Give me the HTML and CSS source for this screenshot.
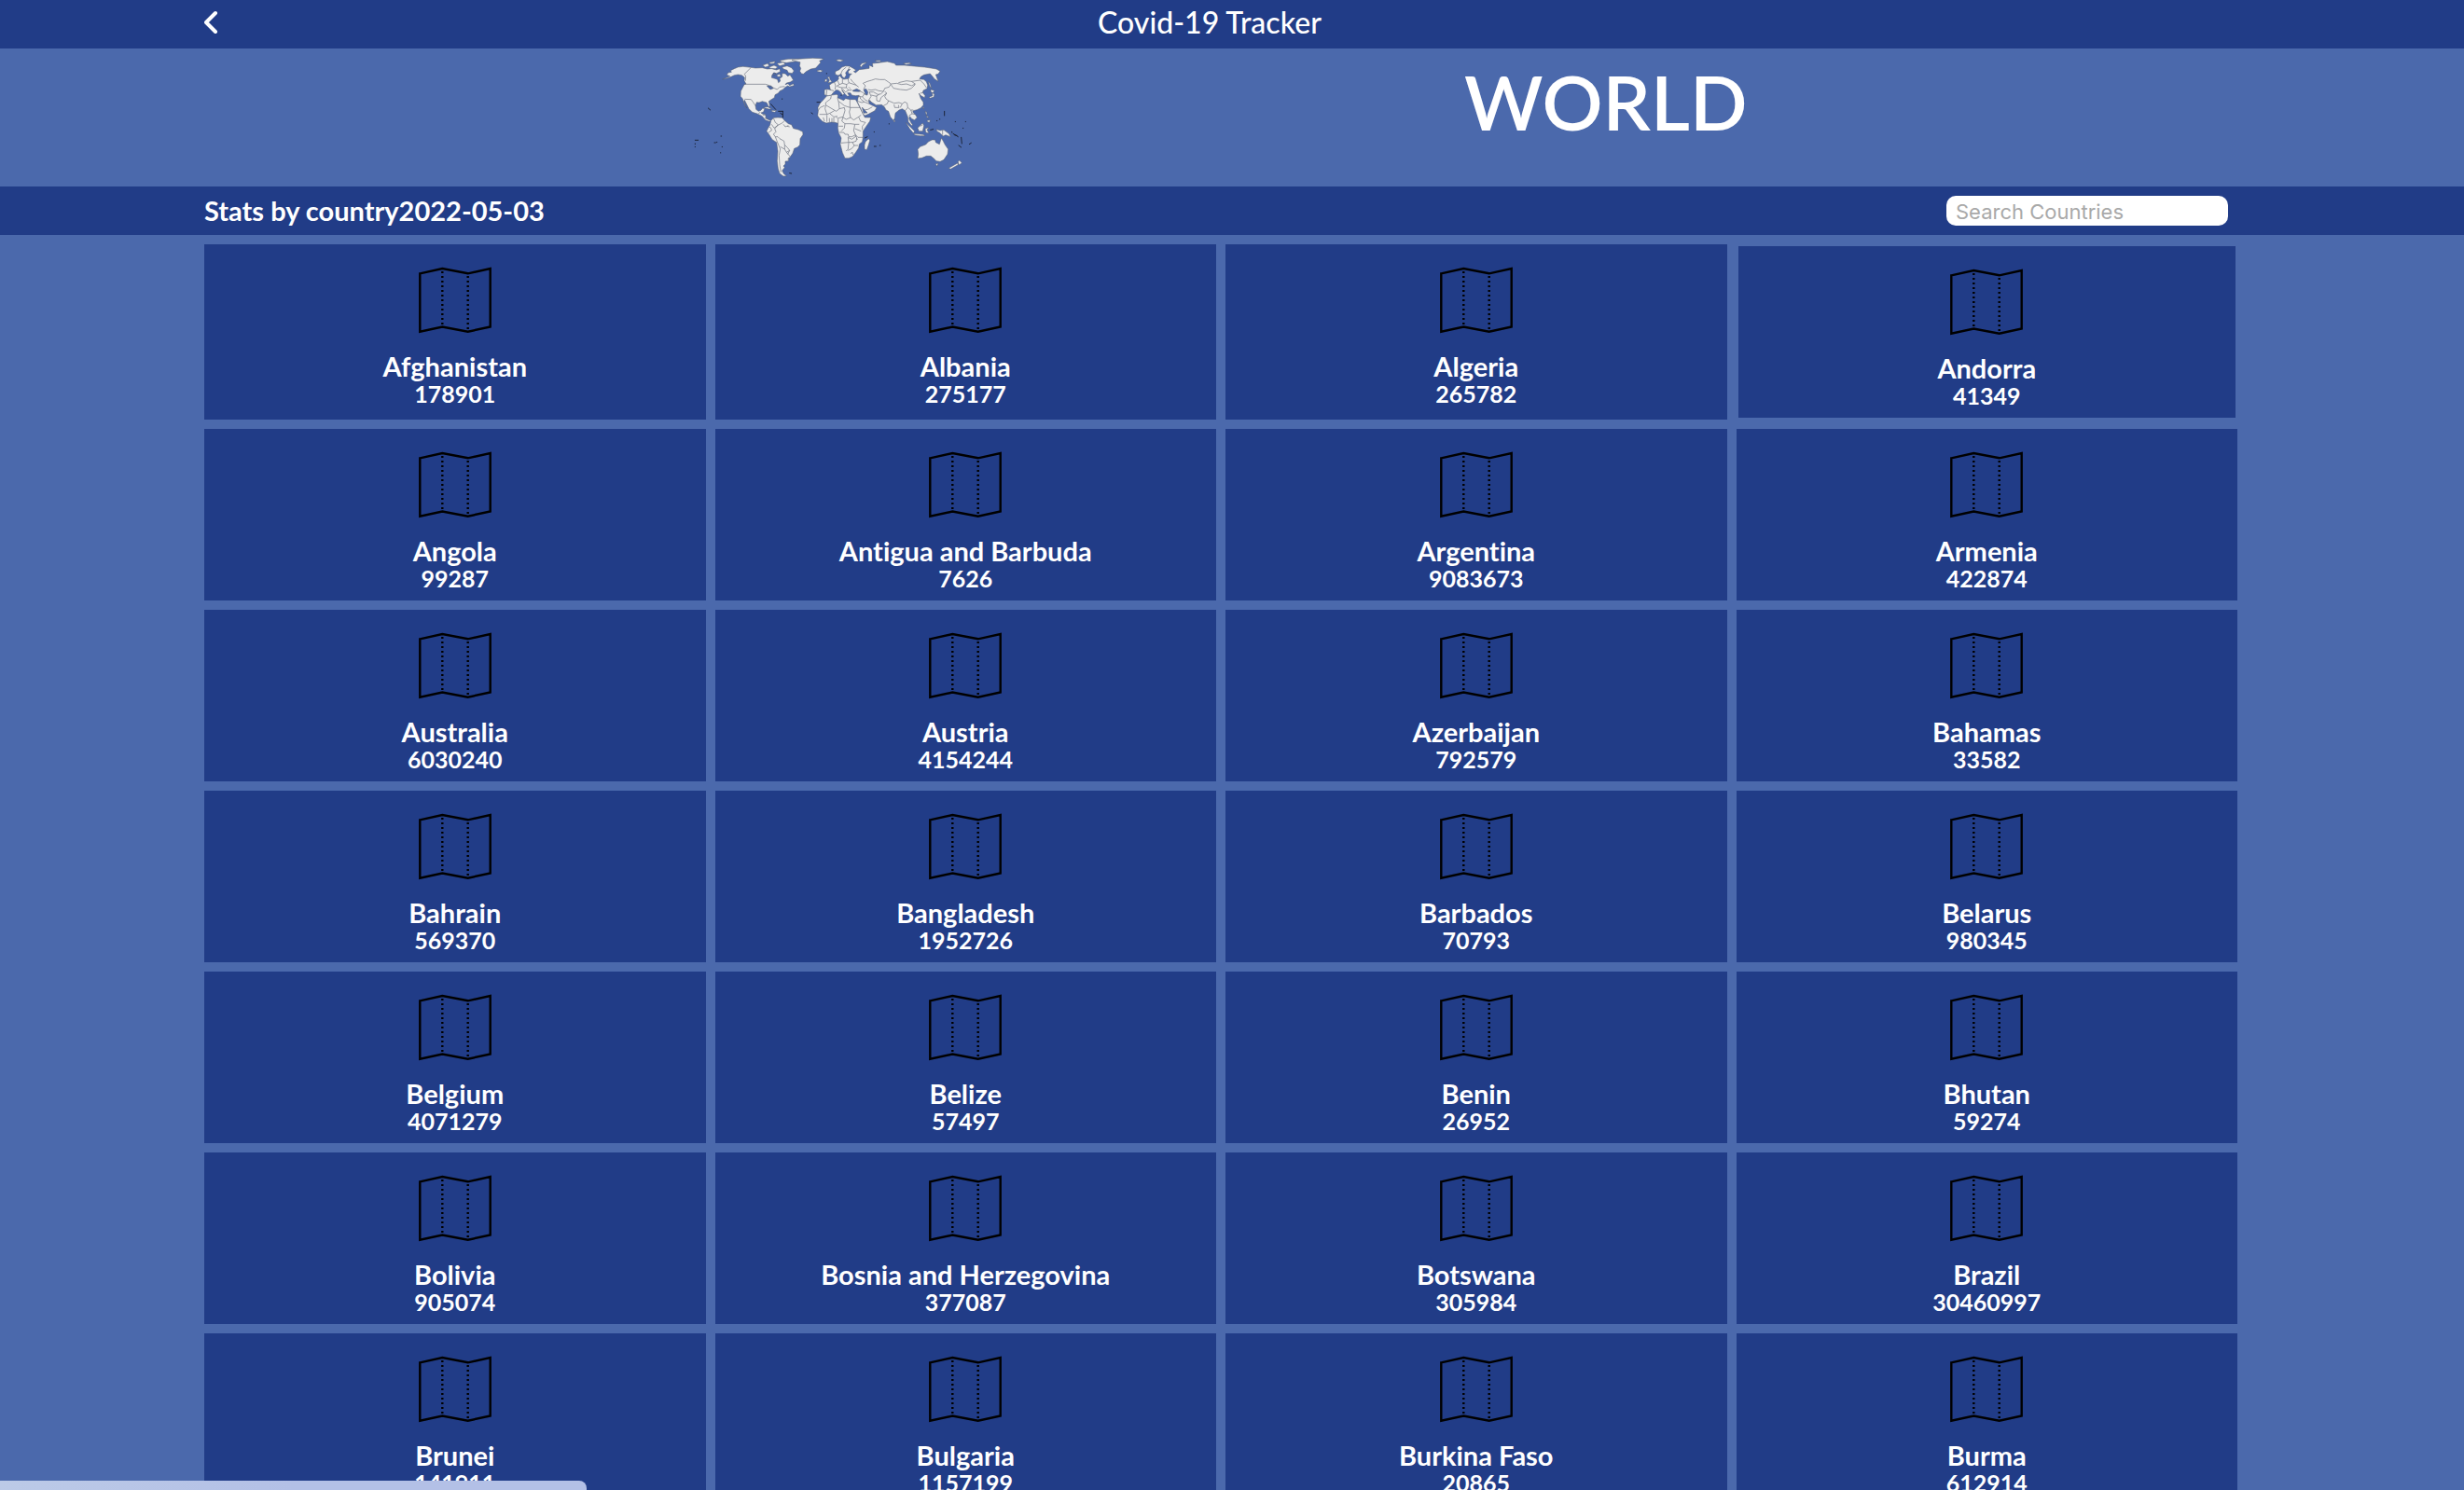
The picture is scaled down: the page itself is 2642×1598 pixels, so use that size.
FILE: index.html
```
<!DOCTYPE html>
<html lang="en">
<head>
<meta charset="utf-8">
<meta name="viewport" content="width=device-width, initial-scale=1">
<title>Covid-19 Tracker</title>
<link rel="stylesheet" href="styles.css">
</head>
<body>
<svg class="defs" aria-hidden="true">
  <symbol id="map" viewBox="0 0 80 80">
    <path d="M2.3 11.3 26.3 6 53.7 11.3 77.7 6V68.5L53.7 73.7 26.3 68.5 2.3 73.7Z" fill="none" stroke="#000" stroke-width="2.4"/>
    <path d="M26.3 9V68M53.7 14V73" fill="none" stroke="#000" stroke-width="2.4" stroke-dasharray="2 3"/>
  </symbol>
</svg>

<header class="topbar">
  <a class="back" href="#" aria-label="Back">
    <svg width="16" height="26" viewBox="1 0 16 26"><path d="M13 3 3 13 13 23" fill="none" stroke="#fff" stroke-width="4" stroke-linecap="round" stroke-linejoin="round"/></svg>
  </a>
  <p class="brand">Covid-19 Tracker</p>
</header>

<main>
<section class="hero">
  <svg class="world" viewBox="42 6 900 444" role="img" aria-label="World map">
    <g fill="#ececec" stroke="#555c6c" stroke-width="1.5" stroke-linejoin="round">
      <!-- North and Central America -->
      <path d="M134 105 150 99 158 95 148 91 152 84 163 82 160 77 172 71 184 66 200 64 226 67 240 69 262 68 278 72 292 71 308 75 318 71 320 80 306 87 300 84 293 92 292 100 303 103 311 106 314 116 320 111 318 103 326 97 326 86 336 87 344 95 351 91 356 98 362 108 352 114 340 117 336 122 345 119 350 125 362 119 364 125 350 129 344 126 334 132 330 137 318 143 314 149 303 155 301 164 290 171 283 176 286 190 283 194 276 180 262 176 252 180 244 179 240 190 242 202 250 208 258 205 262 199 270 199 266 210 258 213 263 217 272 218 274 231 284 236 290 238 285 241 272 236 262 224 246 216 230 211 219 200 212 186 205 172 203 176 208 192 213 198 207 191 201 175 199 168 192 160 193 143 204 122 210 120 204 110 205 99 196 92 184 90 172 92 162 97 148 102Z"/>
      <!-- Arctic islands -->
      <path d="M263 60 280 54 284 62 272 66ZM284 66 300 60 312 66 304 71 288 70ZM284 51 304 47 300 54 288 55ZM309 54 330 50 336 57 318 62ZM326 66 342 62 356 68 364 78 358 86 346 84 342 76 330 72ZM318 45 345 40 384 39 392 42 366 48 340 52 326 50ZM308 92 318 88 322 96 312 97Z"/>
      <path d="M357 43 390 39 424 37 450 38 460 40 446 46 450 51 442 60 434 69 418 72 403 80 395 88 388 87 383 79 386 70 382 62 384 50 366 46ZM438 77 448 75 457 78 450 82 440 80Z"/>
      <!-- Caribbean -->
      <path d="M266 195 280 194 292 201 284 201 272 198ZM293 205 308 206 302 211 293 209Z"/>
      <!-- South America -->
      <path d="M290 238 299 229 312 228 326 229 334 238 346 248 356 251 362 263 378 267 392 274 393 283 384 296 383 316 376 323 365 328 360 343 352 355 344 362 348 358 346 368 336 369 336 378 330 384 334 389 326 399 331 409 340 416 330 417 318 408 313 393 310 368 312 336 308 308 294 299 283 281 276 272 281 262 287 252Z"/>
      <!-- Africa -->
      <path d="M469 159 485 156 500 154 506 156 504 164 514 169 524 173 530 167 544 170 562 170 568 180 580 204 586 217 592 228 611 228 608 240 596 257 586 272 586 290 584 306 574 314 572 326 562 341 552 354 540 359 528 359 520 341 513 314 516 294 508 278 505 262 506 247 496 244 484 243 468 246 456 241 446 231 440 222 442 208 441 196 448 182 458 172ZM594 306 604 296 608 302 604 316 598 332 591 330 591 316Z"/>
      <!-- Eurasia -->
      <path d="M462 139 470 137 481 139 478 124 486 118 494 115 504 109 508 103 506 98 512 94 517 101 524 105 540 103 544 92 550 88 540 87 538 80 545 73 538 74 530 84 532 92 526 101 519 97 516 88 506 93 497 89 497 80 510 74 518 66 530 62 542 63 552 68 564 76 556 80 562 84 574 74 592 72 606 70 606 60 618 65 616 54 636 52 664 48 688 54 692 60 720 60 742 62 760 64 784 66 804 69 822 72 834 79 828 88 820 90 828 112 816 104 808 94 802 87 782 91 772 97 768 104 782 106 790 113 794 124 792 135 780 141 778 148 786 158 784 164 776 160 770 156 766 150 772 167 780 179 780 188 772 197 760 203 748 206 746 210 756 221 760 228 752 236 744 233 736 224 734 232 740 244 746 252 742 254 732 242 730 226 722 206 712 200 702 204 690 214 688 230 684 238 674 226 668 208 660 204 655 194 646 187 628 188 612 178 604 172 606 184 614 188 622 192 630 196 624 206 604 217 592 222 586 216 576 194 568 178 570 165 574 157 562 158 550 156 546 149 536 149 542 158 536 160 528 152 522 143 518 140 526 152 520 156 514 146 506 140 498 140 492 146 484 156 474 158 462 155Z"/>
      <!-- British Isles, Svalbard and Novaya Zemlya -->
      <path d="M472 98 478 97 480 106 486 113 474 117 478 108ZM464 106 470 104 470 112 463 113ZM499 43 510 41 524 44 514 48 506 47ZM576 62 582 54 598 50 594 54 584 60 582 66ZM624 45 640 44 644 48 630 48ZM716 54 734 52 742 55 724 58Z"/>
      <!-- Japan, Indonesia, Philippines and New Guinea -->
      <path d="M796 112 802 120 806 134 800 126ZM804 138 816 142 810 149 804 145ZM808 149 816 152 814 162 802 166 798 163 810 158ZM724 244 738 258 752 272 748 278 736 264ZM750 280 780 283 786 287 770 287 752 284ZM762 262 778 246 782 254 778 272 766 272ZM786 264 798 260 792 268 798 278 788 276ZM786 208 792 212 790 222 798 228 792 228ZM792 238 802 236 800 244 794 242ZM822 266 834 270 846 268 862 280 868 290 852 284 844 288 834 278 824 272ZM685 234 690 240 686 243ZM779 195 782 194 780 201Z"/>
      <!-- Oceania -->
      <path d="M762 331 770 322 788 315 796 306 808 300 818 300 820 308 832 314 838 294 844 304 850 316 860 330 858 346 846 364 834 370 822 368 814 360 804 352 790 352 776 358 762 360 764 346ZM820 377 828 376 824 385ZM892 370 896 366 904 374 894 381ZM862 391 890 375 892 380 868 394Z"/>
    </g>
    <!-- Seas cut into the land -->
    <g fill="#4b69ac" stroke="#555c6c" stroke-width="1.5">
      <path d="M552 142 560 138 566 136 578 142 574 145 556 144ZM588 138 596 136 602 146 600 156 594 154ZM583 195 600 213 588 214ZM298 84 306 86 303 92 296 92ZM277 126 290 126 298 134 288 138 282 132Z"/>
    </g>
    <!-- Borders -->
    <g fill="none" stroke="#6a6f7d" stroke-width="2" stroke-linejoin="round">
      <path d="M205 121H272L282 124 292 130 310 138 318 130 334 128M226 67 205 88 209 96 208 110M205 169 226 170 232 178 240 190M250 216 256 210M264 220 272 220M270 230 280 232"/>
      <path d="M298 230 304 244 314 252 300 262 292 250M314 252 326 246 334 238M330 250 336 258 346 254M342 256 350 258M312 252 302 264 306 274 298 282 304 290 312 290 318 296 332 304 334 316 344 326 350 334 340 340 334 330 334 316M304 290 310 306 316 320 320 330 316 350 318 380 322 404M320 322 334 330M340 340 352 354M282 276 292 270 290 262 284 258M350 334 344 346"/>
      <path d="M484 157 482 168 466 180 466 188 500 208 510 200 508 180 504 165M466 188 464 200 470 218 446 218M442 206 448 196 462 190M510 200 526 196 528 206 522 226 506 230M544 170V196H576M544 196 526 190 508 176M546 196 542 210 546 228 532 234 522 228M470 218 480 214 494 206M470 220 470 242M458 228 462 240M478 230V243M486 230V243M492 228V243M500 226 506 232 506 246M480 216 492 226 504 224M522 226 518 240 528 248 546 248 560 250M546 228 556 236 572 226 580 220M560 250 556 270 562 284 550 290 540 290 538 282 528 282 524 276 510 276M528 248 526 262 516 272M508 256 522 256M572 226 578 240 594 244 584 256 584 268M560 250 574 250M560 264 580 272M562 284 570 292 586 292M538 292 540 308 516 310M538 292 550 298 564 288M540 308 538 330 532 336M540 308 552 308 558 318 550 328 538 334M552 308 564 304 566 294M558 318 570 318M546 344 552 340 554 348M562 284 568 300"/>
      <path d="M480 139 492 142M470 139 468 156M494 115 498 126 496 138M504 109 510 122 500 128M510 122 520 118 520 104M520 118 534 122 540 116 538 104M534 122 532 132 516 132 504 128M532 132 540 140 530 146 522 138M540 140 550 140M540 116 552 120 564 124 572 130M546 104 552 112 564 124M540 130 546 136M518 132 520 142M514 90 520 76 532 66M538 76 542 66"/>
      <path d="M588 137 594 126 586 118 600 112 614 108 626 104 640 106 656 106 668 114 676 120 694 118 710 122 726 120 742 126 754 120 742 112 726 110 700 116M742 112 770 108 782 120 790 132M676 120 670 130 656 134 652 144 636 142 626 138 612 140 602 138M676 122 684 134 706 138 726 140 742 134 754 122M652 144 644 152 634 154 620 146 606 146M656 144 662 150 644 164 640 176 630 174 630 158 638 154M662 150 656 160 660 168 668 174 664 184 652 190M668 174 686 182 702 180 712 184 706 196M686 186 688 196 702 196 700 188M712 184 720 178 728 182 730 196 722 206M730 196 740 204 748 204M740 204 744 216 734 222M744 216 754 218M570 160 584 162 590 152 598 156M584 162 594 172 602 176M576 160 578 168 590 178 606 184M590 178 582 180 570 176M588 204 602 202 616 194M574 142 586 148 592 154M606 146 612 160 606 170 612 178M612 156 630 160M770 150 780 148M842 270V284M770 256 778 252"/>
    </g>
    <!-- Small islands -->
    <g fill="none" stroke="#1c2438" stroke-width="3" stroke-linecap="round">
      <path d="M290 185 296 192M297 193 305 202M314 208H328M328 208V228M326 218 320 214M350 407 356 408M420 213 424 216M438 179H448M88 198 95 204M46 301H56M46 312V314M46 322V323M108 309H112M116 307V308M129 288H131M133 322V323M128 341V342M469 86V87M516 156V157M592 294 600 290M622 321H628M640 318H642M848 208V222M824 238V239M833 233V234M883 241V242M916 241V242M908 262V263M872 274V276M876 280 892 290M888 286 880 284M902 292 904 312M894 318 902 324M928 314 934 310M622 274V275M670 248V249M326 168V169M803 268 812 266"/>
    </g>
  </svg>
  <h1 class="hero-title">WORLD</h1>
</section>

<section class="statsbar">
  <h2 class="stats-title">Stats by country2022-05-03</h2>
  <input class="search" type="text" placeholder="Search Countries" aria-label="Search Countries">
</section>

<section class="countries">
  <a class="card" href="#"><svg class="icon"><use href="#map"/></svg><h3 class="name">Afghanistan</h3><p class="count">178901</p></a>
  <a class="card" href="#"><svg class="icon"><use href="#map"/></svg><h3 class="name">Albania</h3><p class="count">275177</p></a>
  <a class="card" href="#"><svg class="icon"><use href="#map"/></svg><h3 class="name">Algeria</h3><p class="count">265782</p></a>
  <a class="card card-active" href="#"><svg class="icon"><use href="#map"/></svg><h3 class="name">Andorra</h3><p class="count">41349</p></a>
  <a class="card" href="#"><svg class="icon"><use href="#map"/></svg><h3 class="name">Angola</h3><p class="count">99287</p></a>
  <a class="card" href="#"><svg class="icon"><use href="#map"/></svg><h3 class="name">Antigua and Barbuda</h3><p class="count">7626</p></a>
  <a class="card" href="#"><svg class="icon"><use href="#map"/></svg><h3 class="name">Argentina</h3><p class="count">9083673</p></a>
  <a class="card" href="#"><svg class="icon"><use href="#map"/></svg><h3 class="name">Armenia</h3><p class="count">422874</p></a>
  <a class="card" href="#"><svg class="icon"><use href="#map"/></svg><h3 class="name">Australia</h3><p class="count">6030240</p></a>
  <a class="card" href="#"><svg class="icon"><use href="#map"/></svg><h3 class="name">Austria</h3><p class="count">4154244</p></a>
  <a class="card" href="#"><svg class="icon"><use href="#map"/></svg><h3 class="name">Azerbaijan</h3><p class="count">792579</p></a>
  <a class="card" href="#"><svg class="icon"><use href="#map"/></svg><h3 class="name">Bahamas</h3><p class="count">33582</p></a>
  <a class="card" href="#"><svg class="icon"><use href="#map"/></svg><h3 class="name">Bahrain</h3><p class="count">569370</p></a>
  <a class="card" href="#"><svg class="icon"><use href="#map"/></svg><h3 class="name">Bangladesh</h3><p class="count">1952726</p></a>
  <a class="card" href="#"><svg class="icon"><use href="#map"/></svg><h3 class="name">Barbados</h3><p class="count">70793</p></a>
  <a class="card" href="#"><svg class="icon"><use href="#map"/></svg><h3 class="name">Belarus</h3><p class="count">980345</p></a>
  <a class="card" href="#"><svg class="icon"><use href="#map"/></svg><h3 class="name">Belgium</h3><p class="count">4071279</p></a>
  <a class="card" href="#"><svg class="icon"><use href="#map"/></svg><h3 class="name">Belize</h3><p class="count">57497</p></a>
  <a class="card" href="#"><svg class="icon"><use href="#map"/></svg><h3 class="name">Benin</h3><p class="count">26952</p></a>
  <a class="card" href="#"><svg class="icon"><use href="#map"/></svg><h3 class="name">Bhutan</h3><p class="count">59274</p></a>
  <a class="card" href="#"><svg class="icon"><use href="#map"/></svg><h3 class="name">Bolivia</h3><p class="count">905074</p></a>
  <a class="card" href="#"><svg class="icon"><use href="#map"/></svg><h3 class="name">Bosnia and Herzegovina</h3><p class="count">377087</p></a>
  <a class="card" href="#"><svg class="icon"><use href="#map"/></svg><h3 class="name">Botswana</h3><p class="count">305984</p></a>
  <a class="card" href="#"><svg class="icon"><use href="#map"/></svg><h3 class="name">Brazil</h3><p class="count">30460997</p></a>
  <a class="card" href="#"><svg class="icon"><use href="#map"/></svg><h3 class="name">Brunei</h3><p class="count">141911</p></a>
  <a class="card" href="#"><svg class="icon"><use href="#map"/></svg><h3 class="name">Bulgaria</h3><p class="count">1157199</p></a>
  <a class="card" href="#"><svg class="icon"><use href="#map"/></svg><h3 class="name">Burkina Faso</h3><p class="count">20865</p></a>
  <a class="card" href="#"><svg class="icon"><use href="#map"/></svg><h3 class="name">Burma</h3><p class="count">612914</p></a>
</section>
</main>
<div class="status"></div>
</body>
</html>
```
FILE: styles.css
```
:root {
  --dark: #213c87;
  --light: #4b69ac;
  --left: 219px;
  --right: 243px;
}

* {
  box-sizing: border-box;
  margin: 0;
}

html {
  scrollbar-width: none;
}

body {
  background: var(--light);
  color: #fff;
  font-family: Lato, "Liberation Sans", sans-serif;
  font-variant-ligatures: none;
}

.defs {
  position: absolute;
  width: 0;
  height: 0;
}

.topbar {
  display: grid;
  grid-template-columns: 1fr auto 1fr;
  align-items: center;
  padding: 0 267px 4px var(--left);
  background: var(--dark);
}

.back {
  display: flex;
}

.brand {
  font-size: 32px;
  font-weight: 500;
  line-height: 48px;
}

.hero {
  display: flex;
  justify-content: space-evenly;
  align-items: flex-start;
  padding: 0 var(--right) 0 var(--left);
}

.world {
  display: block;
  width: 300px;
  height: 148px;
}

.hero-title {
  padding-top: 8px;
  font-size: 81px;
  font-weight: 600;
  line-height: 98px;
}

.statsbar {
  display: flex;
  justify-content: space-between;
  align-items: center;
  padding: 10px 253px 10px var(--left);
  background: var(--dark);
}

.stats-title {
  font-size: 29px;
  font-weight: 700;
  line-height: 32px;
}

.search {
  width: 302px;
  height: 32px;
  padding: 2px 10px 0;
  border: 0;
  border-radius: 10px;
  background: #fff;
  color: #222;
  font: 22px Inter, "Liberation Sans", sans-serif;
}

.search::placeholder {
  color: #a9a9a9;
}

.countries {
  display: grid;
  grid-template-columns: repeat(4, 1fr);
  gap: 10px;
  padding: 10px var(--right) 10px var(--left);
}

.card {
  display: flex;
  flex-direction: column;
  align-items: center;
  padding: 20px 10px 11px;
  background: var(--dark);
  color: #fff;
  text-decoration: none;
}

.card-active {
  margin: 2px;
}

.icon {
  width: 80px;
  height: 80px;
  margin-bottom: 15px;
}

.name {
  font-size: 29px;
  font-weight: 700;
  line-height: 32px;
}

.count {
  font-size: 25px;
  font-weight: 700;
  line-height: 26px;
}

.status {
  position: fixed;
  left: 0;
  bottom: 0;
  width: 629px;
  height: 10px;
  border-top-right-radius: 8px;
  background: linear-gradient(90deg, #bccae7, #b3c0e6 50%);
}
```
